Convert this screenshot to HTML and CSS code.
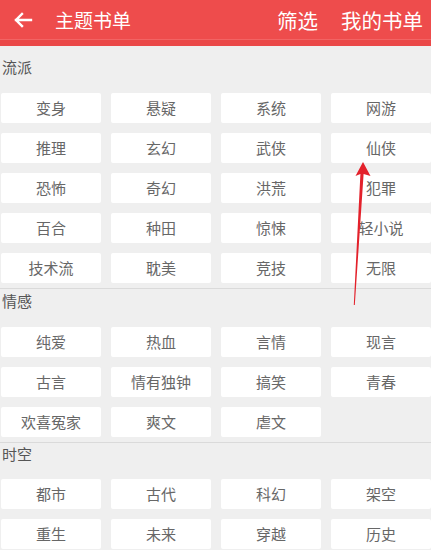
FILE: index.html
```html
<!DOCTYPE html>
<html lang="zh">
<head>
<meta charset="utf-8">
<link rel="stylesheet" href="styles.css">
</head>
<body>
<div class="app">
  <header class="topbar">
    <svg class="back" width="20" height="16" viewBox="0 0 20 16"><path d="M18 8H3M9 2L3 8l6 6" fill="none" stroke="#fff" stroke-width="2.4" stroke-linecap="square"/></svg>
    <span class="title">主题书单</span>
    <span class="spacer"></span>
    <span class="action">筛选</span>
    <span class="action">我的书单</span>
  </header>
  <main class="content">
    <section class="group first">
      <div class="label">流派</div>
      <div class="grid">
        <div class="tag">变身</div><div class="tag">悬疑</div><div class="tag">系统</div><div class="tag">网游</div>
        <div class="tag">推理</div><div class="tag">玄幻</div><div class="tag">武侠</div><div class="tag">仙侠</div>
        <div class="tag">恐怖</div><div class="tag">奇幻</div><div class="tag">洪荒</div><div class="tag">犯罪</div>
        <div class="tag">百合</div><div class="tag">种田</div><div class="tag">惊悚</div><div class="tag">轻小说</div>
        <div class="tag">技术流</div><div class="tag">耽美</div><div class="tag">竞技</div><div class="tag">无限</div>
      </div>
    </section>
    <section class="group">
      <div class="label">情感</div>
      <div class="grid">
        <div class="tag">纯爱</div><div class="tag">热血</div><div class="tag">言情</div><div class="tag">现言</div>
        <div class="tag">古言</div><div class="tag">情有独钟</div><div class="tag">搞笑</div><div class="tag">青春</div>
        <div class="tag">欢喜冤家</div><div class="tag">爽文</div><div class="tag">虐文</div>
      </div>
    </section>
    <section class="group">
      <div class="label">时空</div>
      <div class="grid">
        <div class="tag">都市</div><div class="tag">古代</div><div class="tag">科幻</div><div class="tag">架空</div>
        <div class="tag">重生</div><div class="tag">未来</div><div class="tag">穿越</div><div class="tag">历史</div>
      </div>
    </section>
  </main>
  <svg class="annot" width="431" height="550" viewBox="0 0 431 550">
    <polygon points="363,162 370.5,176 363.6,174 354.8,305 353.8,305 360.4,174 355.5,176" fill="#e3212b"/>
  </svg>
</div>
</body>
</html>
```
FILE: styles.css
```css
html, body {
  margin: 0;
  padding: 0;
}
body {
  background: #efefef;
  font-family: "Noto Sans CJK SC", "Noto Sans", sans-serif;
  width: 431px;
  height: 550px;
  overflow: hidden;
}
.app {
  position: relative;
  width: 431px;
  height: 550px;
  overflow: hidden;
}
.topbar {
  height: 40px;
  background: #ee4c4c;
  border-bottom: 6px solid #ea4848;
  box-shadow: inset 0 -1px 0 #f26464;
  display: flex;
  align-items: center;
  color: #fff;
  padding: 0 8px 0 13px;
  box-sizing: content-box;
}
.back {
  display: block;
  margin-right: 22px;
}
.title {
  font-size: 19px;
  line-height: 40px;
}
.spacer {
  flex: 1;
}
.action {
  font-size: 20.5px;
  line-height: 40px;
  margin-left: 23px;
}
.content {
  padding-top: 9px;
}
.group {
  border-bottom: 1px solid #dadada;
  padding: 0 0 5px 0;
}
.label {
  height: 24px;
  line-height: 24px;
  font-size: 15px;
  color: #555;
  padding-left: 2px;
}
.grid {
  margin-top: 14px;
  display: grid;
  grid-template-columns: repeat(4, 100px);
  column-gap: 10px;
  row-gap: 10px;
  padding-left: 1px;
}
.group:last-child .label {
  height: 23px;
  line-height: 22px;
}
.group:last-child .grid {
  margin-top: 13px;
}
.tag {
  height: 30px;
  line-height: 30px;
  background: #fff;
  border-radius: 2px;
  text-align: center;
  font-size: 15px;
  color: #676767;
}
.annot {
  position: absolute;
  left: 0;
  top: 0;
  pointer-events: none;
}
```
